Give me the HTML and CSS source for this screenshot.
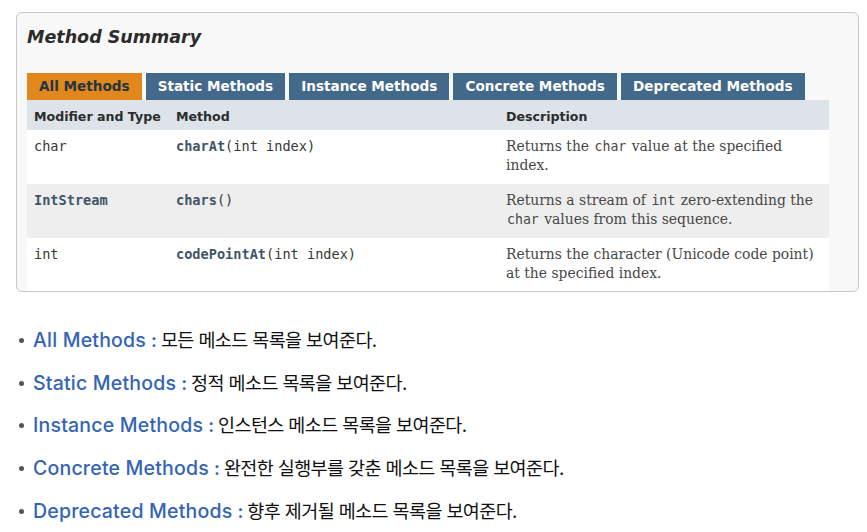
FILE: index.html
```html
<!DOCTYPE html>
<html lang="ko">
<head>
   <meta charset="utf-8">
   <title>Method Summary</title>
   <link rel="stylesheet" href="styles.css">
</head>
<body>

   <div class="page">
      <div class="summary">
         <h2>Method Summary</h2>

         <div class="tabs">
            <span class="tab active">All Methods</span>
            <span class="tab">Static Methods</span>
            <span class="tab">Instance Methods</span>
            <span class="tab">Concrete Methods</span>
            <span class="tab">Deprecated Methods</span>
         </div>

         <table class="members">
            <colgroup>
               <col class="col-type">
               <col class="col-method">
               <col class="col-desc">
            </colgroup>
            <tr>
               <th>Modifier and Type</th>
               <th>Method</th>
               <th>Description</th>
            </tr>
            <tr>
               <td><code>char</code></td>
               <td><code><b>charAt</b>(int&nbsp;index)</code></td>
               <td class="desc">Returns the <code>char</code> value at the specified<br>index.</td>
            </tr>
            <tr class="odd">
               <td><code><b>IntStream</b></code></td>
               <td><code><b>chars</b>()</code></td>
               <td class="desc">Returns a stream of <code>int</code> zero-extending the <code>char</code> values from this sequence.</td>
            </tr>
            <tr>
               <td><code>int</code></td>
               <td><code><b>codePointAt</b>(int&nbsp;index)</code></td>
               <td class="desc">Returns the character (Unicode code point) at the specified index.</td>
            </tr>
         </table>
      </div>

      <ul class="notes">
         <li><span class="name">All Methods</span><span class="colon">:</span> 모든 메소드 목록을 보여준다.</li>
         <li><span class="name">Static Methods</span><span class="colon">:</span> 정적 메소드 목록을 보여준다.</li>
         <li><span class="name">Instance Methods</span><span class="colon">:</span> 인스턴스 메소드 목록을 보여준다.</li>
         <li><span class="name">Concrete Methods</span><span class="colon">:</span> 완전한 실행부를 갖춘 메소드 목록을 보여준다.</li>
         <li><span class="name">Deprecated Methods</span><span class="colon">:</span> 향후 제거될 메소드 목록을 보여준다.</li>
      </ul>
   </div>

</body>
</html>
```

FILE: styles.css
```css
body {
   margin: 0;
   background: #ffffff;
   font-family: "DejaVu Sans", sans-serif;
   color: #353833;
}

.page {
   padding: 12px 18px 0 16px;
}

.summary {
   width: 812px;
   height: 278px;
   border: 1px solid #c9c9c9;
   border-radius: 6px;
   background: #f8f8f8;
   padding: 0 19px 0 10px;
   overflow: hidden;
}

h2 {
   margin: 13px 0 25px 0;
   font-size: 17.5px;
   line-height: 22px;
   font-style: italic;
   font-weight: bold;
   color: #2c2c2c;
}

.tabs {
   display: flex;
   gap: 4px;
}

.tab {
   padding: 4px 12px;
   font-size: 13.6px;
   line-height: 19px;
   font-weight: bold;
   color: #ffffff;
   background: #43698a;
}

.tab.active {
   background: #e0881c;
   color: #253441;
}

.members {
   width: 802px;
   border-collapse: collapse;
   table-layout: fixed;
}

.col-type {
   width: 142px;
}

.col-method,
.col-desc {
   width: 330px;
}

.members th {
   background: #dee3e9;
   text-align: left;
   font-size: 12.6px;
   line-height: 19px;
   padding: 7px 7px 4px 7px;
   color: #2a2d2a;
}

.members td {
   background: #ffffff;
   vertical-align: top;
   padding: 7px 7px 9px 7px;
   font-size: 13.6px;
   line-height: 19px;
}

.members tr.odd td {
   background: #eeeeee;
}

code {
   font-family: "DejaVu Sans Mono", monospace;
   font-size: 13.6px;
}

code b {
   color: #3f5468;
}

.members td.desc {
   font-family: "DejaVu Serif", serif;
   font-size: 13.9px;
   color: #474747;
   padding-right: 12px;
}

.desc code {
   font-size: 13.2px;
   margin: 0 1px;
}

.notes {
   list-style: none;
   margin: 34px 0 0 0;
   padding: 0;
   font-family: Inter, "Noto Sans CJK KR", sans-serif;
   font-size: 18.5px;
   color: #111111;
}

.notes li {
   position: relative;
   padding-left: 17px;
   height: 42.7px;
   line-height: 28px;
   letter-spacing: -0.6px;
}

.notes li::before {
   content: "";
   position: absolute;
   left: 3px;
   top: 12px;
   width: 5px;
   height: 5px;
   border-radius: 50%;
   background: #555555;
}

.name {
   color: #3464b4;
   font-size: 19.5px;
   font-weight: 500;
   letter-spacing: 0.2px;
}

.colon {
   color: #3464b4;
   font-weight: 600;
   margin: 0 0 0 5px;
}
```
